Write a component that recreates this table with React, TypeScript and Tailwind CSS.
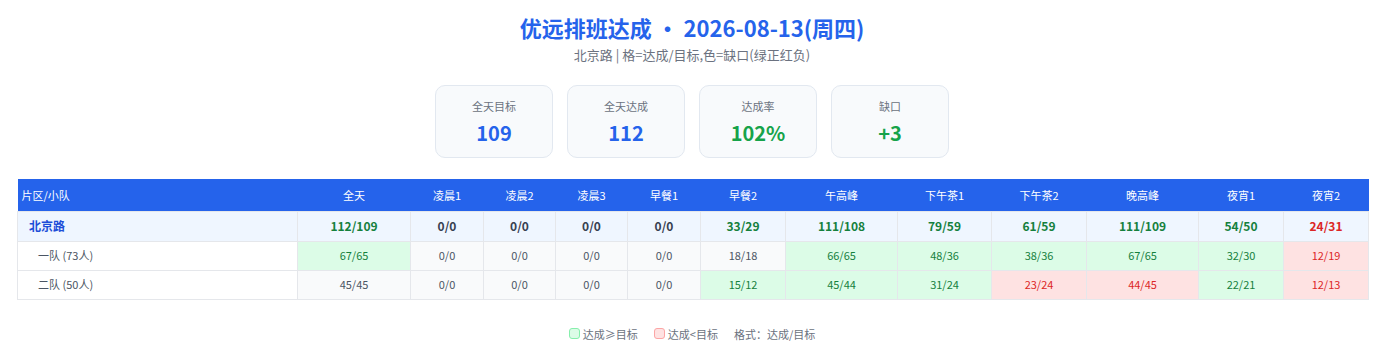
import React from 'react';

type Cell = { v: string; s: 'ok' | 'bad' | 'none' };

const slots = ['全天', '凌晨1', '凌晨2', '凌晨3', '早餐1', '早餐2', '午高峰', '下午茶1', '下午茶2', '晚高峰', '夜宵1', '夜宵2'];
const widths = ['w-[113px]', 'w-[73px]', 'w-[72px]', 'w-[72px]', 'w-[73px]', 'w-[85px]', 'w-[112px]', 'w-[94px]', 'w-[95px]', 'w-[112px]', 'w-[85px]', 'w-[85px]'];

const c = (v: string, s: Cell['s'] = 'none'): Cell => ({ v, s });

const group: Cell[] = [
  c('112/109', 'ok'), c('0/0'), c('0/0'), c('0/0'), c('0/0'), c('33/29', 'ok'),
  c('111/108', 'ok'), c('79/59', 'ok'), c('61/59', 'ok'), c('111/109', 'ok'), c('54/50', 'ok'), c('24/31', 'bad'),
];

const teams: { name: string; cells: Cell[] }[] = [
  {
    name: '一队 (73人)',
    cells: [
      c('67/65', 'ok'), c('0/0'), c('0/0'), c('0/0'), c('0/0'), c('18/18'),
      c('66/65', 'ok'), c('48/36', 'ok'), c('38/36', 'ok'), c('67/65', 'ok'), c('32/30', 'ok'), c('12/19', 'bad'),
    ],
  },
  {
    name: '二队 (50人)',
    cells: [
      c('45/45'), c('0/0'), c('0/0'), c('0/0'), c('0/0'), c('15/12', 'ok'),
      c('45/44', 'ok'), c('31/24', 'ok'), c('23/24', 'bad'), c('44/45', 'bad'), c('22/21', 'ok'), c('12/13', 'bad'),
    ],
  },
];

const stats = [
  { label: '全天目标', value: '109', color: 'text-[#2563eb]' },
  { label: '全天达成', value: '112', color: 'text-[#2563eb]' },
  { label: '达成率', value: '102%', color: 'text-[#16a34a]' },
  { label: '缺口', value: '+3', color: 'text-[#16a34a]' },
];

function teamCellClass(s: Cell['s']) {
  if (s === 'ok') return 'bg-[#dcfce7] text-[#15803d]';
  if (s === 'bad') return 'bg-[#fee2e2] text-[#dc2626]';
  return 'bg-[#f9fafb] text-[#4b5563]';
}

function groupCellClass(s: Cell['s']) {
  if (s === 'ok') return 'text-[#15803d]';
  if (s === 'bad') return 'text-[#dc2626]';
  return 'text-[#374151]';
}

export default function App() {
  return (
    <div className="w-[1384px] h-[357px] bg-white pt-[12px] font-['Noto_Sans_CJK_SC','Noto_Sans',sans-serif]">
      <h1 className="text-center text-[22px] leading-[30px] font-bold text-[#2563eb]">
        优远排班达成 · 2026-08-13(周四)
      </h1>
      <p className="mt-[3px] text-center text-[13px] leading-[20px] text-[#6b7280]">
        北京路 | 格=达成/目标,色=缺口(绿正红负)
      </p>

      <div className="mt-[20px] flex justify-center gap-[14px]">
        {stats.map((s) => (
          <div
            key={s.label}
            className="w-[118px] h-[73px] rounded-[10px] border border-[#e2e8f0] bg-[#f8fafc] flex flex-col items-center pt-[11px]"
          >
            <div className="text-[11px] leading-[18px] text-[#6b7280]">{s.label}</div>
            <div className={`mt-[4px] text-[20px] leading-[28px] font-bold ${s.color}`}>{s.value}</div>
          </div>
        ))}
      </div>

      <div className="mt-[21px] pl-[17px] pr-[16px]">
        <table className="w-[1351px] table-fixed border-collapse text-[12px]">
          <colgroup>
            <col className="w-[280px]" />
            {widths.map((w, i) => (
              <col key={i} className={w} />
            ))}
          </colgroup>
          <thead>
            <tr className="bg-[#2563eb] text-white h-[32px] text-[11px]">
              <th className="text-left font-normal pl-[4px]">片区/小队</th>
              {slots.map((s) => (
                <th key={s} className="font-normal text-center">{s}</th>
              ))}
            </tr>
          </thead>
          <tbody>
            <tr className="bg-[#eff6ff] h-[30px]">
              <td className="border border-[#e5e7eb] pl-[11px] font-bold text-[#1d4ed8]">北京路</td>
              {group.map((g, i) => (
                <td key={i} className={`border border-[#e5e7eb] text-center font-bold ${groupCellClass(g.s)}`}>
                  {g.v}
                </td>
              ))}
            </tr>
            {teams.map((t) => (
              <tr key={t.name} className="h-[29px]">
                <td className="border border-[#e5e7eb] bg-white pl-[20px] text-[11px] text-[#4b5563]">{t.name}</td>
                {t.cells.map((g, i) => (
                  <td key={i} className={`border border-[#e5e7eb] text-center text-[11px] ${teamCellClass(g.s)}`}>
                    {g.v}
                  </td>
                ))}
              </tr>
            ))}
          </tbody>
        </table>
      </div>

      <div className="mt-[25px] flex justify-center items-center gap-[16px] text-[11px] leading-[18px] text-[#6b7280]">
        <span className="flex items-center gap-[3px]">
          <span className="inline-block w-[11px] h-[11px] rounded-[3px] bg-[#dcfce7] border border-[#86efac]" />
          达成≥目标
        </span>
        <span className="flex items-center gap-[3px]">
          <span className="inline-block w-[11px] h-[11px] rounded-[3px] bg-[#fee2e2] border border-[#fca5a5]" />
          达成&lt;目标
        </span>
        <span>格式：达成/目标</span>
      </div>
    </div>
  );
}
